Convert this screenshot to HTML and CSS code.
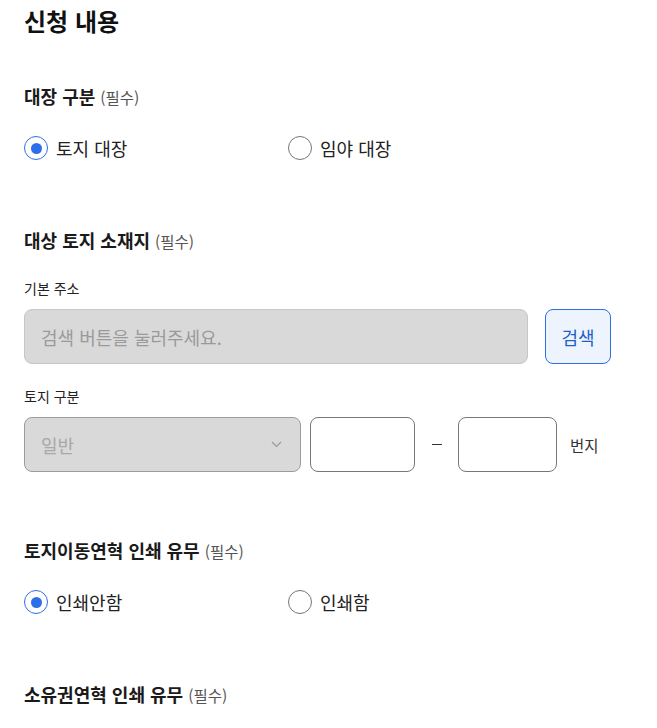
FILE: index.html
```html
<!DOCTYPE html>
<html lang="ko">
<head>
<meta charset="utf-8">
<link rel="stylesheet" href="styles.css">
</head>
<body>
<div class="page">
  <h1 class="title">신청 내용</h1>

  <section class="section first">
    <h2 class="label">대장 구분 <span class="req">(필수)</span></h2>
    <div class="radio-group">
      <label class="radio checked"><span class="dot"></span>토지 대장</label>
      <label class="radio"><span class="dot"></span>임야 대장</label>
    </div>
  </section>

  <section class="section">
    <h2 class="label">대상 토지 소재지 <span class="req">(필수)</span></h2>
    <div class="field addr">
      <div class="sub">기본 주소</div>
      <div class="row">
        <div class="input disabled wide">검색 버튼을 눌러주세요.</div>
        <button class="btn">검색</button>
      </div>
    </div>
    <div class="field land">
      <div class="sub">토지 구분</div>
      <div class="row land-row">
        <div class="input select">일반
          <svg class="chev" width="11" height="7" viewBox="0 0 11 7"><path d="M1 1l4.5 4.5L10 1" fill="none" stroke="#9a9a9a" stroke-width="1.2"/></svg>
        </div>
        <div class="input box b1"></div>
        <span class="dash"><span class="dash-line"></span></span>
        <div class="input box b2"></div>
        <span class="unit">번지</span>
      </div>
    </div>
  </section>

  <section class="section s3">
    <h2 class="label">토지이동연혁 인쇄 유무 <span class="req">(필수)</span></h2>
    <div class="radio-group">
      <label class="radio checked"><span class="dot"></span>인쇄안함</label>
      <label class="radio"><span class="dot"></span>인쇄함</label>
    </div>
  </section>

  <section class="section">
    <h2 class="label">소유권연혁 인쇄 유무 <span class="req">(필수)</span></h2>
  </section>
</div>
</body>
</html>
```

FILE: styles.css
```css
* { box-sizing: border-box; }
body {
  margin: 0;
  background: #fff;
  font-family: "Noto Sans CJK KR", "Noto Sans", sans-serif;
  color: #222;
}
.page {
  padding: 5px 24px 0 24px;
}
.title {
  margin: 0;
  font-size: 24px;
  line-height: 32px;
  height: 32px;
  font-weight: 700;
  color: #111;
}
.section { margin-top: 68px; }
.section.first { margin-top: 47px; }
.section.s3 { margin-top: 66px; }
.label {
  margin: 0;
  height: 24px;
  font-size: 18px;
  line-height: 24px;
  font-weight: 700;
  color: #1a1a1a;
  white-space: nowrap;
}
.req {
  font-size: 15.5px;
  line-height: 1;
  font-weight: 400;
  color: #555;
}
.radio-group {
  margin-top: 28px;
  display: grid;
  grid-template-columns: 264px 1fr;
}
.radio {
  display: flex;
  align-items: center;
  gap: 8px;
  height: 24px;
  font-size: 18px;
  line-height: 24px;
  color: #222;
}
.dot {
  width: 24px;
  height: 24px;
  border-radius: 50%;
  border: 1px solid #767676;
  display: inline-flex;
  align-items: center;
  justify-content: center;
  flex: none;
}
.radio.checked .dot {
  border: 1.5px solid #2d6fe6;
}
.radio.checked .dot::after {
  content: "";
  width: 11px;
  height: 11px;
  border-radius: 50%;
  background: #2d6fe6;
}
.field.addr { margin-top: 26px; }
.field.land { margin-top: 22px; }
.sub {
  font-size: 14px;
  line-height: 20px;
  height: 20px;
  color: #222;
}
.row {
  margin-top: 11px;
  display: flex;
  align-items: center;
}
.input {
  height: 55px;
  border-radius: 8px;
  border: 1px solid #777;
  background: #fff;
  display: flex;
  align-items: center;
  padding: 0 16px;
  font-size: 18px;
}
.input.disabled {
  background: #d9d9d9;
  border-color: #c6c6c6;
  color: #9a9a9a;
}
.wide { width: 504px; }
.btn {
  margin-left: 17px;
  width: 66px;
  height: 55px;
  border: 1px solid #2d6fe6;
  border-radius: 8px;
  background: #eef4fd;
  color: #1f5fc9;
  font-family: inherit;
  font-size: 18px;
  padding: 0;
}
.select {
  width: 277px;
  background: #d9d9d9;
  border-color: #9c9c9c;
  color: #a8a8a8;
  justify-content: space-between;
  padding-right: 18px;
}
.chev { display: block; }
.b1 { width: 105px; margin-left: 9px; }
.b2 { width: 99px; }
.dash {
  width: 43px;
  display: flex;
  justify-content: center;
}
.dash-line {
  width: 10px;
  height: 1px;
  background: #333;
}
.unit {
  margin-left: 13px;
  font-size: 15.5px;
  color: #333;
}
```
